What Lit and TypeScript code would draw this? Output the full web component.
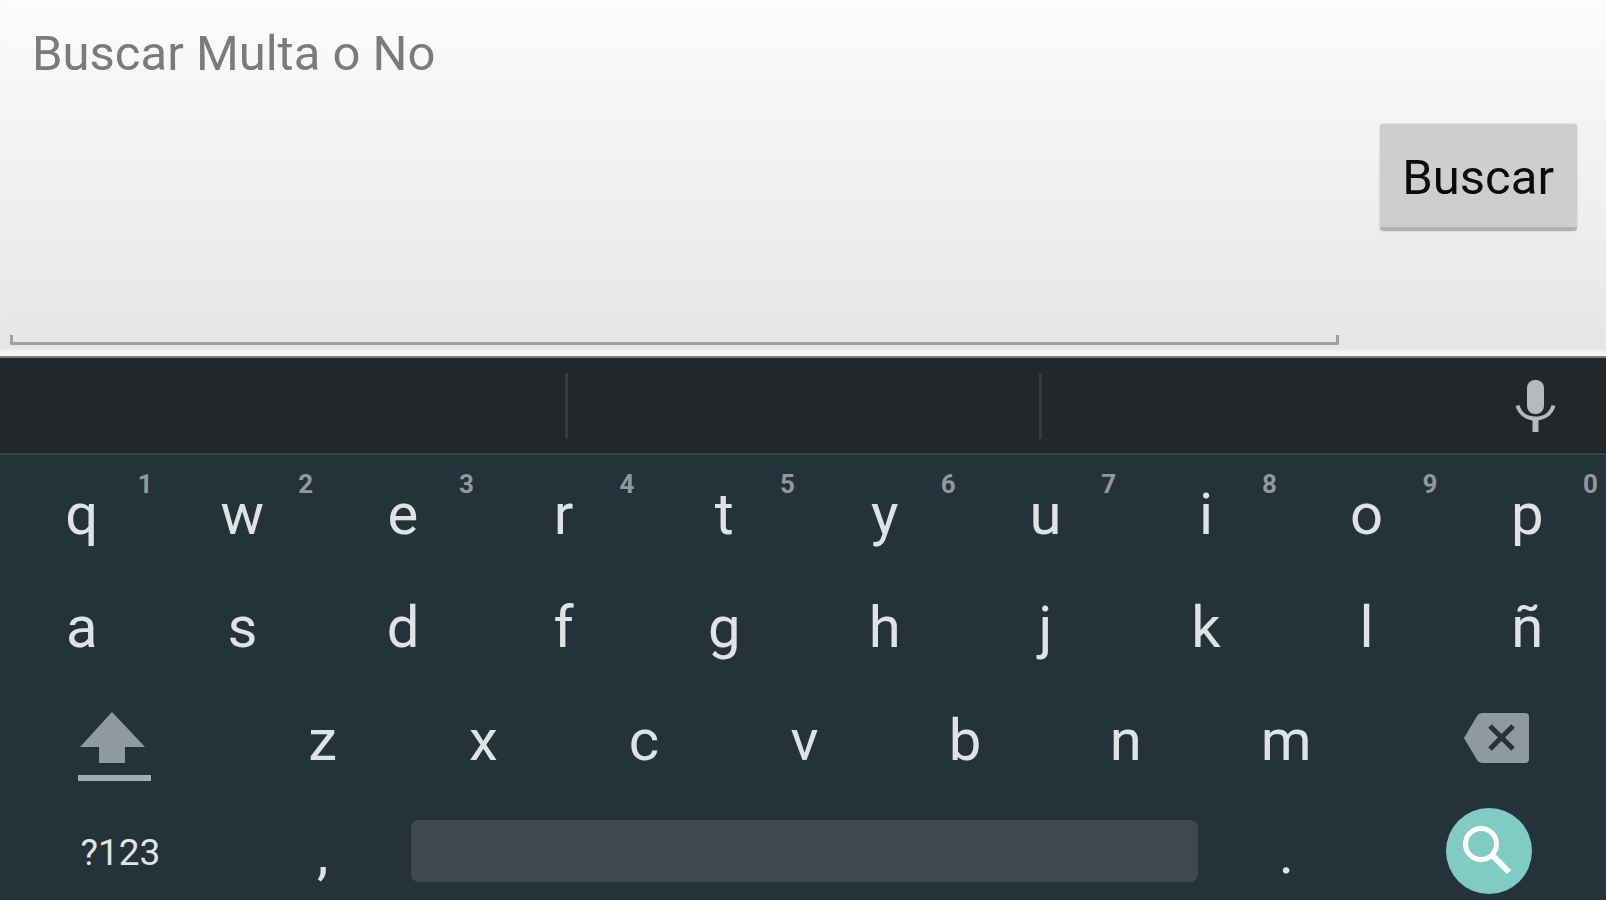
import { LitElement, html, css, nothing } from "lit";
import { customElement, property } from "lit/decorators.js";

@customElement("search-panel")
class SearchPanel extends LitElement {
  static styles = css`
    :host {
      display: block;
      background: linear-gradient(#fcfcfc, #e5e5e5);
      border-bottom: 2px solid #787b7d;
      box-sizing: border-box;
    }
    .form {
      display: flex;
      align-items: flex-start;
      height: 100%;
      box-sizing: border-box;
      padding: 0 29px 11px 10px;
      gap: 41px;
      box-shadow: inset 0 -7px 3px -1px #f4f4f4;
    }
    .field {
      flex: 1;
      align-self: stretch;
      display: flex;
      flex-direction: column;
    }
    .text {
      flex: 1;
      box-sizing: border-box;
      width: 100%;
      min-height: 0;
      margin: 0;
      padding: 25px 20px 0;
      border: 0;
      outline: 0;
      resize: none;
      background: transparent;
      color: #111;
      text-indent: 2px;
      font: 49px/58px Roboto, "Open Sans", sans-serif;
    }
    .text::placeholder {
      color: #7b7b7b;
      opacity: 1;
    }
    .underline {
      height: 7px;
      border: 3px solid #a0a0a0;
      border-top: 0;
      border-radius: 0 0 2px 2px;
    }
    .submit {
      box-sizing: border-box;
      margin: 124px 0 0;
      padding: 25px 23px 20px 22px;
      border: 0;
      border-bottom: 4px solid #b2b2b2;
      border-radius: 4px;
      background: #cecece;
      box-shadow: 0 0 2px #bbb;
      color: #0a0a0a;
      font: 49px/58px Roboto, "Open Sans", sans-serif;
    }
  `;

  render() {
    return html`
      <form class="form" @submit=${(e: Event) => e.preventDefault()}>
        <div class="field">
          <textarea
            class="text"
            aria-label="Buscar Multa o No"
            placeholder="Buscar Multa o No"
          ></textarea>
          <div class="underline"></div>
        </div>
        <button class="submit" type="submit">Buscar</button>
      </form>
    `;
  }
}

@customElement("suggestion-bar")
class SuggestionBar extends LitElement {
  static styles = css`
    :host {
      display: block;
      background: #21272a;
      border-bottom: 2px solid #384145;
    }
    .bar {
      display: grid;
      grid-template-columns: 568fr 474fr 564fr;
      align-items: center;
      height: 95px;
    }
    .slot {
      box-sizing: border-box;
      height: 66px;
      border-right: 3px solid #343a3d;
    }
    .last {
      display: flex;
      justify-content: flex-end;
      padding-right: 40px;
      border: 0;
    }
    .mic {
      padding: 0;
      border: 0;
      background: none;
    }
    .glyph {
      display: block;
    }
  `;

  render() {
    return html`
      <div class="bar">
        <div class="slot"></div>
        <div class="slot"></div>
        <div class="slot last">
          <button class="mic" aria-label="Voz">
            <svg class="glyph" width="60" height="60" viewBox="0 0 60 60">
              <rect x="21" y="4" width="17" height="34" rx="8" fill="#b4babd" />
              <path
                d="M11.500 29.500C14 38 21 42.500 29.500 42.500S45 38 47.500 29.500"
                fill="none"
                stroke="#b4babd"
                stroke-width="4"
              />
              <path d="M29.500 42V56" stroke="#b4babd" stroke-width="6" />
            </svg>
          </button>
        </div>
      </div>
    `;
  }
}

@customElement("key-cap")
class KeyCap extends LitElement {
  @property() label = "";
  @property() hint = "";

  static styles = css`
    :host {
      display: block;
      grid-column: span 2;
    }
    .key {
      position: relative;
      display: block;
      box-sizing: border-box;
      width: 100%;
      height: 100%;
      padding: 4px 0 0 3px;
      border: 0;
      background: none;
      color: #dfe3e5;
      font: 58px/68px Roboto, "Open Sans", sans-serif;
      text-align: center;
    }
    .hint {
      position: absolute;
      top: 13px;
      right: 8px;
      color: #8f999e;
      font-size: 26px;
      font-weight: 700;
      line-height: 32px;
    }
  `;

  render() {
    return html`
      <button class="key">
        ${this.label}${this.hint
          ? html`<span class="hint">${this.hint}</span>`
          : nothing}
      </button>
    `;
  }
}

@customElement("key-board")
class KeyBoard extends LitElement {
  static styles = css`
    :host {
      display: block;
      background: #263239;
    }
    .rows {
      display: grid;
      grid-template-columns: repeat(20, 1fr);
      grid-auto-rows: 113px;
      height: 445px;
      overflow: hidden;
    }
    .wide {
      grid-column: span 3;
      display: grid;
      place-items: center;
      padding: 0;
      border: 0;
      background: none;
    }
    .symbols {
      padding-top: 4px;
      color: #dfe3e5;
      font: 37px/44px Roboto, "Open Sans", sans-serif;
    }
    .space {
      grid-column: span 10;
      align-self: center;
      height: 62px;
      margin: 0 7px 0 9px;
      padding: 0;
      border: 0;
      border-radius: 8px;
      background: #40484e;
    }
    .glyph {
      display: block;
    }
  `;

  render() {
    const key = (label: string, hint = "") =>
      html`<key-cap .label=${label} .hint=${hint}></key-cap>`;

    return html`
      <div class="rows">
        ${[..."qwertyuiop"].map((c, i) => key(c, String((i + 1) % 10)))}
        ${[..."asdfghjklñ"].map((c) => key(c))}
        <button class="wide" aria-label="Mayúsculas">
          <svg class="glyph" width="84" height="92" viewBox="0 0 84 92">
            <path d="M34 20L67 55H47V71H21V55H2Z" fill="#8e9a9e" />
            <path d="M0 86H73" stroke="#a3adb0" stroke-width="6" />
          </svg>
        </button>
        ${[..."zxcvbnm"].map((c) => key(c))}
        <button class="wide" aria-label="Borrar">
          <svg class="glyph" width="92" height="60" viewBox="0 0 92 60">
            <path
              d="M42 5H85Q89 5 89 9V51Q89 55 85 55H42Q39 55 37 52L24 30L37 8Q39 5 42 5Z"
              fill="#8e9a9e"
            />
            <path d="M50 18L73 41M73 18L50 41" stroke="#263239" stroke-width="5" />
          </svg>
        </button>
        <button class="wide symbols">?123</button>
        ${key(",")}
        <button class="space" aria-label="Espacio"></button>
        ${key(".")}
        <button class="wide" aria-label="Buscar">
          <svg class="glyph" width="92" height="88" viewBox="0 0 92 88">
            <circle cx="49" cy="44" r="43" fill="#80cbc4" />
            <circle cx="41" cy="37" r="15.500" fill="none" stroke="#fff" stroke-width="5" />
            <path d="M52 48L69 65" stroke="#fff" stroke-width="6" />
          </svg>
        </button>
      </div>
    `;
  }
}

@customElement("app-root")
class AppRoot extends LitElement {
  static styles = css`
    :host {
      display: grid;
      grid-template-rows: minmax(280px, 1fr) auto auto;
      min-height: 100vh;
      background: #263239;
      overflow: hidden;
    }
  `;

  render() {
    return html`
      <search-panel></search-panel>
      <suggestion-bar></suggestion-bar>
      <key-board></key-board>
    `;
  }
}
